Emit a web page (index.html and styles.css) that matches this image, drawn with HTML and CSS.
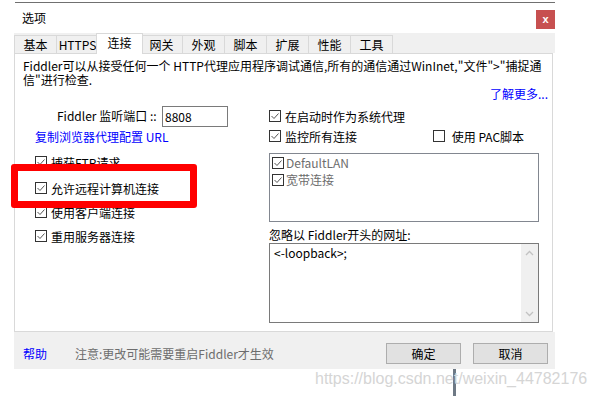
FILE: index.html
```html
<!DOCTYPE html>
<html lang="zh-CN">
<head>
  <meta charset="UTF-8">
  <title>选项</title>
  <link rel="stylesheet" href="styles.css">
</head>
<body>
  <div class="remnant-top"></div>
  <div class="dialog">
    <div class="titlebar">
      <span class="title">选项</span>
      <span class="close">x</span>
    </div>
    <div class="tabstrip">
      <span class="tab">基本</span>
      <span class="tab">HTTPS</span>
      <span class="tab active">连接</span>
      <span class="tab">网关</span>
      <span class="tab">外观</span>
      <span class="tab">脚本</span>
      <span class="tab">扩展</span>
      <span class="tab">性能</span>
      <span class="tab">工具</span>
    </div>
    <div class="panel">
      <p class="intro">Fiddler可以从接受任何一个 HTTP代理应用程序调试通信,所有的通信通过WinInet,"文件"&gt;"捕捉通<br>信"进行检查.</p>
      <div class="more"><a href="#">了解更多...</a></div>
      <div class="cols">
        <div class="col-left">
          <div class="port-row">
            <span class="port-label">Fiddler 监听端口 ::</span>
            <span class="input">8808</span>
          </div>
          <a class="copy-link" href="#">复制浏览器代理配置 URL</a>
          <ul class="cb-list">
            <li class="cb-row"><svg class="cb" viewBox="0 0 12 12"><rect x="0.5" y="0.5" width="11" height="11"/><path d="M2.5 6l2.5 2.5 4.5-5"/></svg>捕获FTP请求</li>
            <li class="cb-row"><svg class="cb" viewBox="0 0 12 12"><rect x="0.5" y="0.5" width="11" height="11"/><path d="M2.5 6l2.5 2.5 4.5-5"/></svg>允许远程计算机连接</li>
            <li class="cb-row"><svg class="cb" viewBox="0 0 12 12"><rect x="0.5" y="0.5" width="11" height="11"/><path d="M2.5 6l2.5 2.5 4.5-5"/></svg>使用客户端连接</li>
            <li class="cb-row"><svg class="cb" viewBox="0 0 12 12"><rect x="0.5" y="0.5" width="11" height="11"/><path d="M2.5 6l2.5 2.5 4.5-5"/></svg>重用服务器连接</li>
          </ul>
          <div class="highlight"></div>
        </div>
        <div class="col-right">
          <div class="cb-row short"><svg class="cb" viewBox="0 0 12 12"><rect x="0.5" y="0.5" width="11" height="11"/><path d="M2.5 6l2.5 2.5 4.5-5"/></svg>在启动时作为系统代理</div>
          <div class="pair">
            <div class="cb-row short first"><svg class="cb" viewBox="0 0 12 12"><rect x="0.5" y="0.5" width="11" height="11"/><path d="M2.5 6l2.5 2.5 4.5-5"/></svg>监控所有连接</div>
            <div class="cb-row short"><svg class="cb" viewBox="0 0 12 12"><rect x="0.5" y="0.5" width="11" height="11"/></svg>&nbsp;使用 PAC脚本</div>
          </div>
          <div class="listbox">
            <div class="cb-row item"><svg class="cb" viewBox="0 0 12 12"><rect x="0.5" y="0.5" width="11" height="11"/><path d="M2.5 6l2.5 2.5 4.5-5"/></svg>DefaultLAN</div>
            <div class="cb-row item"><svg class="cb" viewBox="0 0 12 12"><rect x="0.5" y="0.5" width="11" height="11"/><path d="M2.5 6l2.5 2.5 4.5-5"/></svg>宽带连接</div>
          </div>
          <div class="ignore-label">忽略以 Fiddler开头的网址:</div>
          <div class="textbox">
            <div class="textbox-text">&lt;-loopback&gt;;</div>
            <div class="scrollbar">
              <span class="arrow"><svg viewBox="0 0 9 6"><path d="M1 5l3.5-3.5 3.5 3.5"/></svg></span>
              <span class="arrow"><svg viewBox="0 0 9 6"><path d="M1 1l3.5 3.5 3.5-3.5"/></svg></span>
            </div>
          </div>
        </div>
      </div>
    </div>
    <div class="footer">
      <a class="help" href="#">帮助</a>
      <span class="note">注意:更改可能需要重启Fiddler才生效</span>
      <div class="buttons">
        <span class="btn">确定</span>
        <span class="btn">取消</span>
      </div>
    </div>
  </div>
  <div class="below">
    <span class="watermark">https://blog.csdn.net/weixin_44782176</span>
  </div>
</body>
</html>
```

FILE: styles.css
```css
body {
  margin: 0;
  background: #fff;
  color: #000;
  font-family: "Noto Sans CJK SC", "Noto Sans", sans-serif;
  font-size: 12px;
}
a {
  color: #0000ff;
  text-decoration: none;
}
.remnant-top {
  margin-left: 15px;
  width: 540px;
  height: 2px;
  border-bottom: 1px solid #707070;
}
.dialog {
  margin-left: 14px;
  width: 541px;
}
.titlebar {
  height: 30px;
  display: flex;
  align-items: flex-start;
}
.title {
  padding: 7px 0 0 8px;
  line-height: 16px;
}
.close {
  margin: 7px 0 0 auto;
  width: 19px;
  height: 19px;
  background: #c75050;
  color: #fff;
  font: bold 11px/18px "Liberation Sans", sans-serif;
  text-align: center;
}
.tabstrip {
  height: 20px;
  display: flex;
  align-items: flex-end;
  background: #f0f0f0;
}
.tab {
  width: 43px;
  height: 18px;
  box-sizing: border-box;
  border: 1px solid #d9d9d9;
  border-bottom: 0;
  margin-right: -1px;
  text-align: center;
  line-height: 17px;
  white-space: nowrap;
}
.tab.active {
  position: relative;
  width: 47px;
  height: 21px;
  margin: 0 -3px -1px -2px;
  background: #fff;
  line-height: 17px;
}
.panel {
  height: 279px;
  box-sizing: border-box;
  margin-right: 2px;
  border: 1px solid #d9d9d9;
  background: #fff;
}
.intro {
  margin: 0;
  padding: 5px 8px 0;
  line-height: 14px;
  white-space: nowrap;
}
.more {
  margin-top: 0;
  padding-right: 4px;
  text-align: right;
  line-height: 13px;
}
.cols {
  display: grid;
  grid-template-columns: 234px 270px;
  padding-left: 20px;
  margin-top: 5px;
}
.col-left {
  position: relative;
}
.port-row {
  display: flex;
  align-items: flex-start;
  height: 22px;
  padding-left: 22px;
}
.port-label {
  width: 105px;
  line-height: 22px;
  white-space: nowrap;
}
.input {
  width: 66px;
  height: 21px;
  margin-top: 1px;
  box-sizing: border-box;
  border: 1px solid #7a7a7a;
  padding-left: 2px;
  line-height: 19px;
}
.copy-link {
  display: block;
  line-height: 20px;
}
.cb-list {
  list-style: none;
  margin: 3px 0 0;
  padding: 0;
}
.cb-list li:first-child {
  margin-bottom: 2px;
}
.cb-row {
  display: flex;
  align-items: center;
  gap: 4px;
  height: 24px;
  white-space: nowrap;
}
.cb {
  width: 12px;
  height: 12px;
  flex: none;
  fill: #fff;
  stroke: #333;
  stroke-width: 1;
}
.cb path {
  fill: none;
  stroke: #555;
}
.highlight {
  position: absolute;
  left: -24px;
  top: 59px;
  width: 186px;
  height: 44px;
  box-sizing: border-box;
  border: 7px solid #ff0000;
  border-radius: 3px;
}
.col-right {
  padding-top: 1px;
}
.cb-row.short {
  height: 20px;
}
.pair {
  display: flex;
}
.pair .first {
  width: 164px;
}
.listbox {
  height: 69px;
  margin-top: 7px;
  box-sizing: border-box;
  border: 1px solid #828790;
  padding-left: 2px;
  color: #6d6d6d;
}
.cb-row.item {
  height: 17px;
  gap: 2px;
}
.ignore-label {
  margin-top: 5px;
  line-height: 16px;
  white-space: nowrap;
}
.textbox {
  display: flex;
  height: 80px;
  box-sizing: border-box;
  border: 1px solid #7a7a7a;
}
.textbox-text {
  flex: 1;
  padding: 1px 4px;
  line-height: 16px;
}
.scrollbar {
  width: 17px;
  display: flex;
  flex-direction: column;
  justify-content: space-between;
  background: #f0f0f0;
}
.arrow {
  display: flex;
  align-items: center;
  justify-content: center;
  height: 17px;
}
.arrow svg {
  width: 9px;
  height: 6px;
  fill: none;
  stroke: #c2c2c2;
  stroke-width: 1.3;
}
.footer {
  display: flex;
  align-items: flex-start;
  height: 37px;
  box-sizing: border-box;
  padding: 11px 7px 0 9px;
  background: #f0f0f0;
  line-height: 21px;
}
.note {
  margin-left: 28px;
  color: #6d6d6d;
}
.buttons {
  display: flex;
  gap: 12px;
  margin-left: auto;
}
.btn {
  width: 75px;
  height: 21px;
  box-sizing: border-box;
  border: 1px solid #adadad;
  background: #e1e1e1;
  text-align: center;
  line-height: 19px;
}
.below {
  height: 27px;
  box-sizing: border-box;
  padding: 1px 0 0 315px;
  background: linear-gradient(to right, transparent 453px, #6e7985 453px, #6e7985 456px, transparent 456px);
}
.watermark {
  font: 16px/12px "Liberation Sans", Arial, sans-serif;
  color: #d5d5d5;
}
```
